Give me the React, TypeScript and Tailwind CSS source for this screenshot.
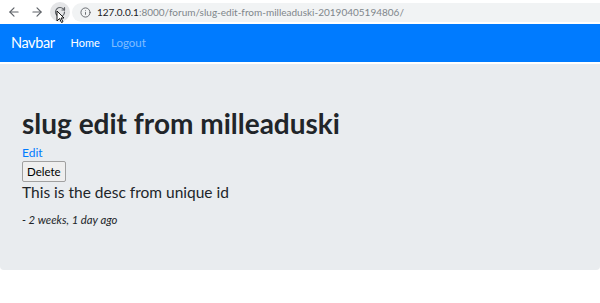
import { ArrowLeft, ArrowRight, RotateCw, Info } from 'lucide-react'

function BrowserBar() {
  return (
    <div className="flex h-[24px] items-center bg-white">
      <div className="flex w-[72px] items-center pl-[7px]">
        <ArrowLeft className="h-[14px] w-[14px] text-[#5f6368]" strokeWidth={2} />
        <ArrowRight className="ml-[9px] h-[14px] w-[14px] text-[#5f6368]" strokeWidth={2} />
        <div className="relative ml-[6px] flex h-[20px] w-[20px] items-center justify-center rounded-full bg-[#e4e5e7]">
          <RotateCw className="h-[12px] w-[12px] text-[#5f6368]" strokeWidth={2.4} />
          <svg className="absolute left-[6px] top-[8px]" width="9" height="13" viewBox="0 0 9 13">
            <path d="M1 1 L1 11 L3.5 8.5 L5.5 12.5 L7 11.8 L5 8 L8 8 Z" fill="#fff" stroke="#000" strokeWidth="0.9" />
          </svg>
        </div>
      </div>
      <div className="flex h-[19px] flex-1 items-center rounded-l-full bg-[#f1f3f4] pl-[8px] font-['Lato',sans-serif] text-[10px]">
        <Info className="h-[11px] w-[11px] text-[#5f6368]" strokeWidth={2} />
        <span className="ml-[6px] text-[#202124]">127.0.0.1</span>
        <span className="text-[#80868b]">:8000/forum/slug-edit-from-milleaduski-20190405194806/</span>
      </div>
    </div>
  )
}

export default function App() {
  return (
    <div className="h-[303px] w-[600px] overflow-hidden bg-white font-['Lato',sans-serif]">
      <BrowserBar />
      <nav className="flex h-[38px] items-center bg-[#007bff] pl-[11px]">
        <span className="text-[14.5px] tracking-[-0.4px] text-white">Navbar</span>
        <a className="ml-[16px] text-[11px] text-white">Home</a>
        <a className="ml-[11px] text-[11.5px] text-white/50">Logout</a>
      </nav>
      <div className="mt-[2px] h-[206px] rounded-b-[4px] bg-[#e9ecef] px-[22px] pt-[41px]">
        <h1 className="text-[28px] font-bold leading-[36px] text-[#212529]">slug edit from milleaduski</h1>
        <a className="mt-[4px] block text-[12px] leading-[15px] text-[#007bff]">Edit</a>
        <button className="mt-[1px] block rounded-[2px] border border-[#a0a0a0] bg-[#efefef] px-[4px] text-[11.5px] leading-[19px] text-black">
          Delete
        </button>
        <p className="text-[15.5px] leading-[20px] text-[#212529]">This is the desc from unique id</p>
        <p className="mt-[10px] text-[11.3px] italic leading-[16px] text-[#212529]">- 2 weeks, 1 day ago</p>
      </div>
    </div>
  )
}
